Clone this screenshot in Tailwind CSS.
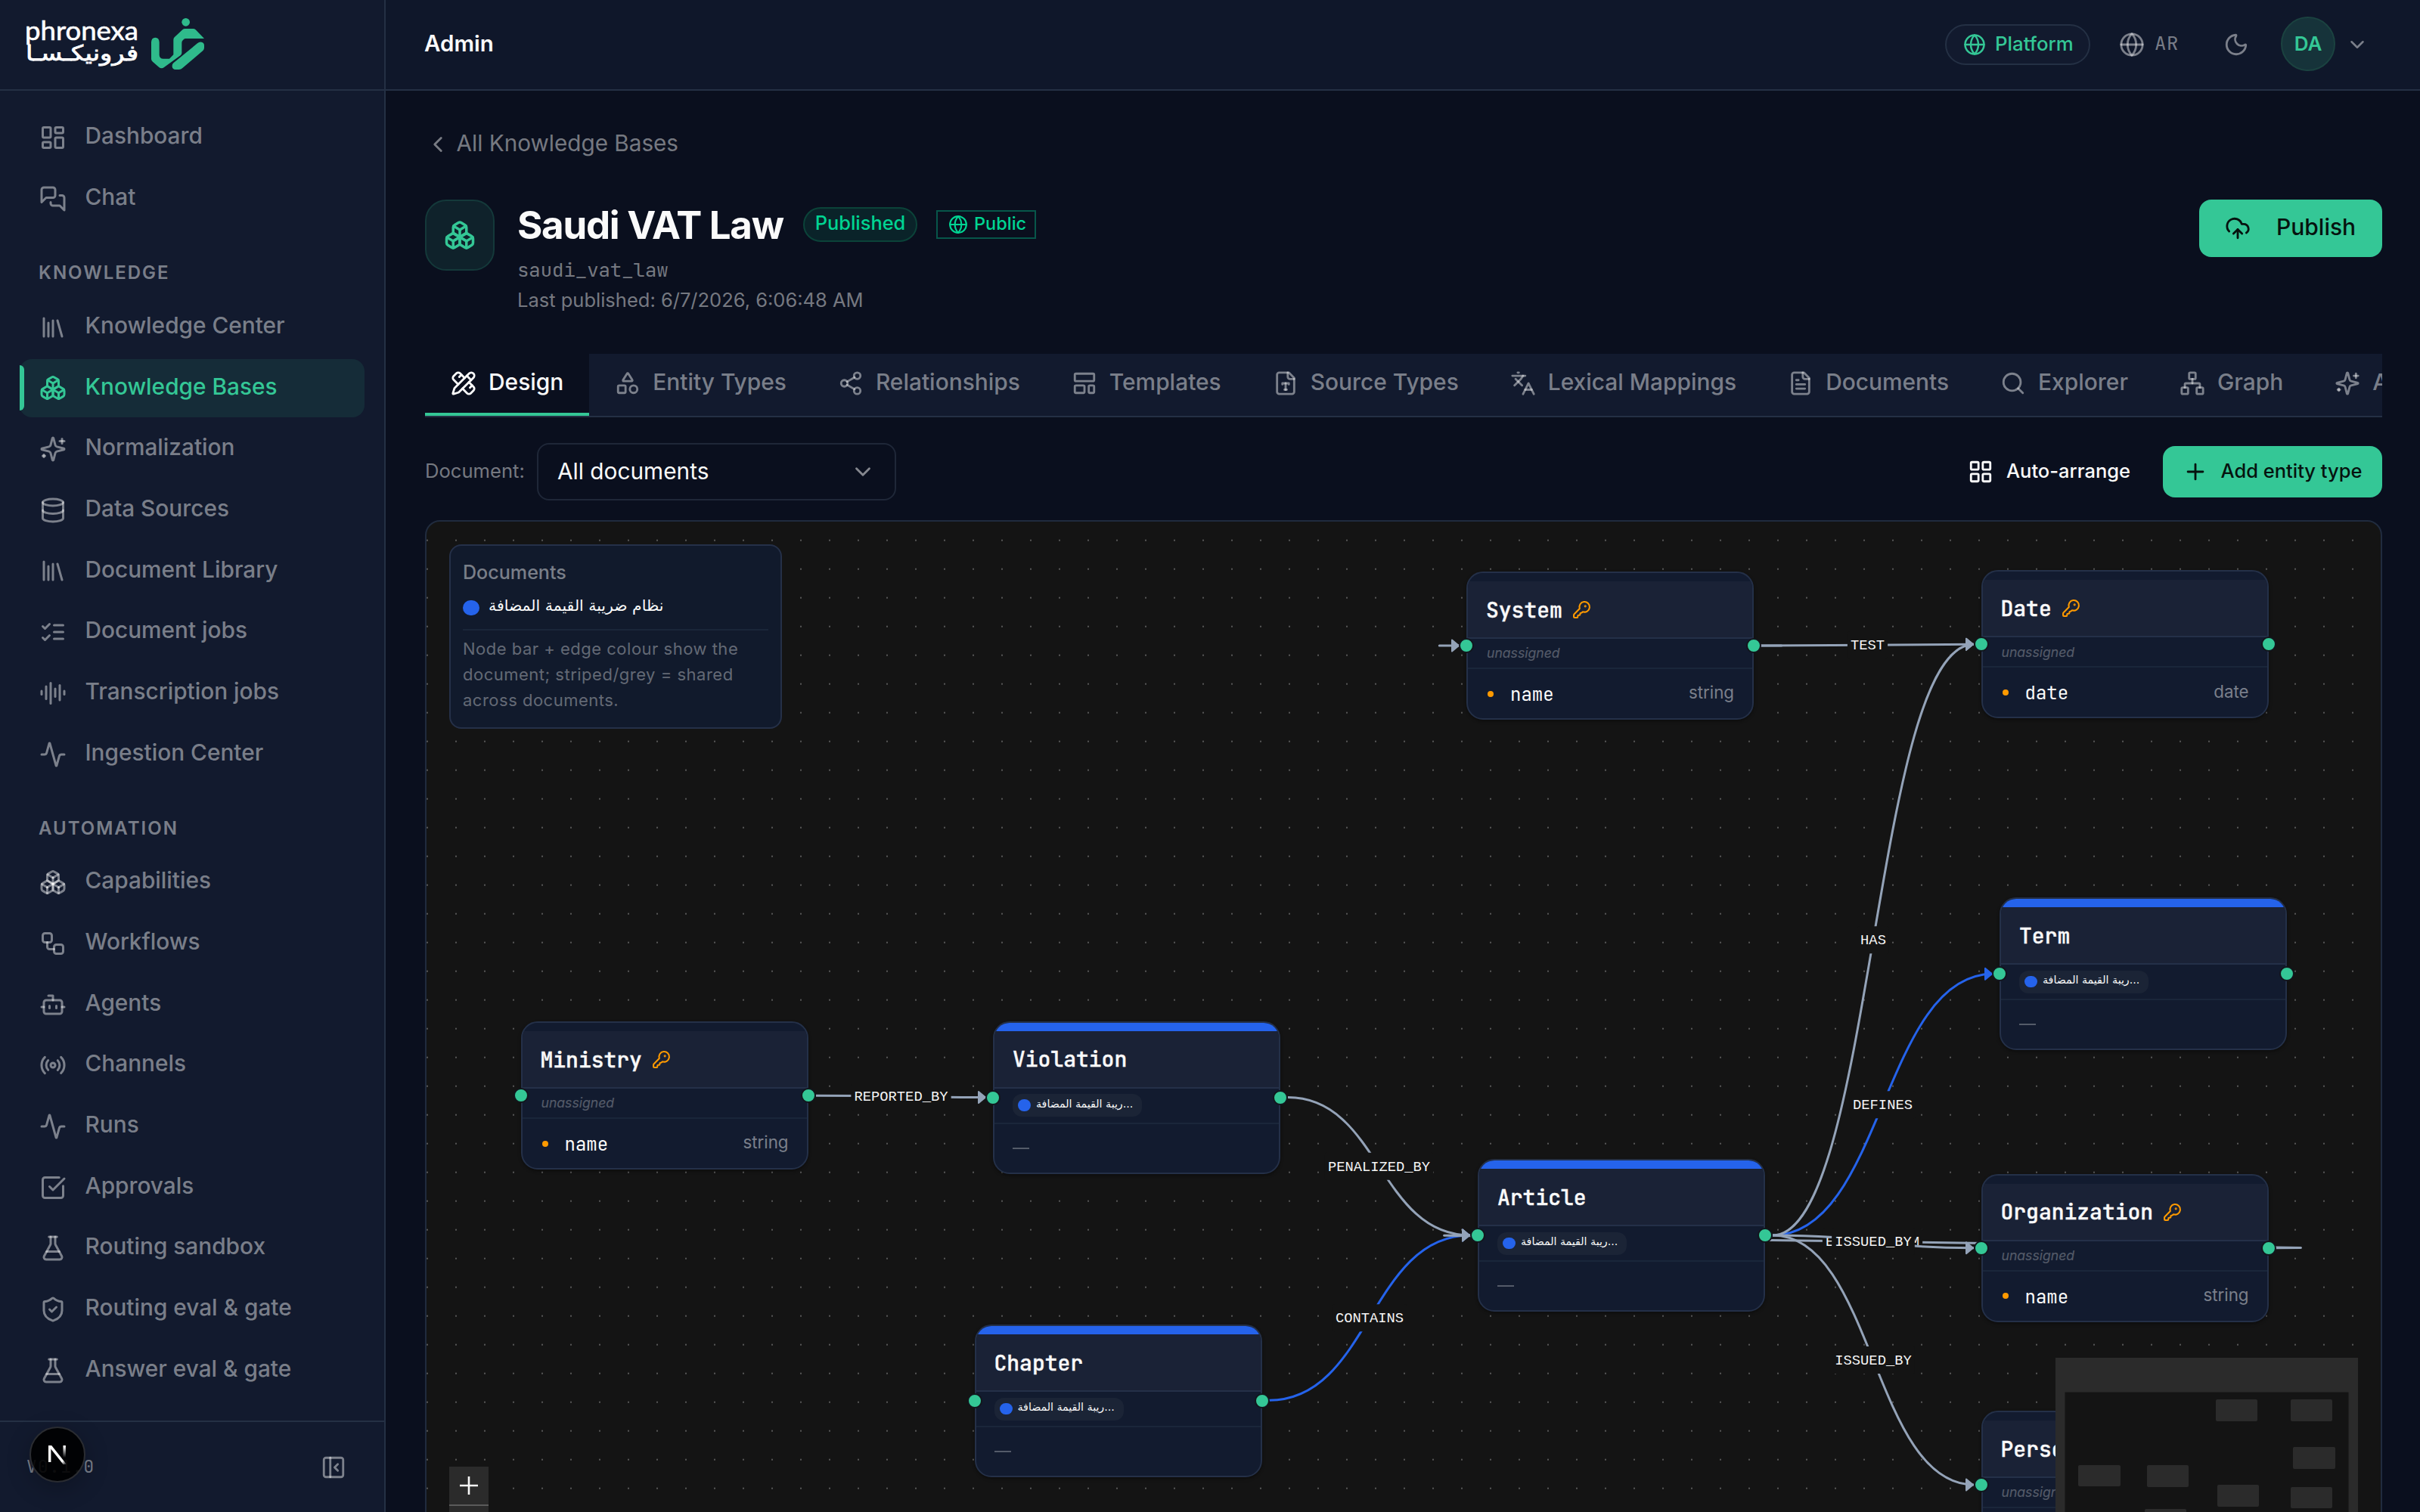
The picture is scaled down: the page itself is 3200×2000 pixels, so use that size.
<!DOCTYPE html>
<html lang="en">
<head>
<meta charset="utf-8">
<title>Saudi VAT Law – Knowledge Bases</title>
<script src="https://cdn.jsdelivr.net/npm/@tailwindcss/browser@4"></script>
</head>
<body class="bg-[#0a0f1e] text-[#fafafa] font-['Inter',sans-serif] leading-none">
<svg class="hidden">
  <symbol id="dashboard" viewBox="0 0 24 24"><rect width="7" height="9" x="3" y="3" rx="1"/><rect width="7" height="5" x="14" y="3" rx="1"/><rect width="7" height="9" x="14" y="12" rx="1"/><rect width="7" height="5" x="3" y="16" rx="1"/></symbol>
  <symbol id="chat" viewBox="0 0 24 24"><path d="M14 9a2 2 0 0 1-2 2H6l-4 4V4a2 2 0 0 1 2-2h8a2 2 0 0 1 2 2z"/><path d="M18 9h2a2 2 0 0 1 2 2v11l-4-4h-6a2 2 0 0 1-2-2v-1"/></symbol>
  <symbol id="library" viewBox="0 0 24 24"><path d="m16 6 4 14"/><path d="M12 6v14"/><path d="M8 8v12"/><path d="M4 4v16"/></symbol>
  <symbol id="boxes" viewBox="0 0 24 24"><path d="M2.97 12.92A2 2 0 0 0 2 14.63v3.24a2 2 0 0 0 .97 1.71l3 1.8a2 2 0 0 0 2.06 0L12 19v-5.5l-5-3-4.03 2.42Z"/><path d="m7 16.5-4.74-2.85"/><path d="m7 16.5 5-3"/><path d="M7 16.5v5.17"/><path d="M12 13.5V19l3.97 2.38a2 2 0 0 0 2.06 0l3-1.8a2 2 0 0 0 .97-1.71v-3.24a2 2 0 0 0-.97-1.71L17 10.5l-5 3Z"/><path d="m17 16.5-5-3"/><path d="m17 16.5 4.74-2.85"/><path d="M17 16.5v5.17"/><path d="M7.97 4.42A2 2 0 0 0 7 6.13v4.37l5 3 5-3V6.13a2 2 0 0 0-.97-1.71l-3-1.8a2 2 0 0 0-2.06 0l-3 1.8Z"/><path d="M12 8 7.26 5.15"/><path d="m12 8 4.74-2.85"/><path d="M12 13.5V8"/></symbol>
  <symbol id="sparkles" viewBox="0 0 24 24"><path d="M9.937 15.5A2 2 0 0 0 8.5 14.063l-6.135-1.582a.5.5 0 0 1 0-.962L8.5 9.936A2 2 0 0 0 9.937 8.5l1.582-6.135a.5.5 0 0 1 .963 0L14.063 8.5A2 2 0 0 0 15.5 9.937l6.135 1.581a.5.5 0 0 1 0 .964L15.5 14.063a2 2 0 0 0-1.437 1.437l-1.582 6.135a.5.5 0 0 1-.963 0z"/><path d="M20 3v4"/><path d="M22 5h-4"/><path d="M4 17v2"/><path d="M5 18H3"/></symbol>
  <symbol id="database" viewBox="0 0 24 24"><ellipse cx="12" cy="5" rx="9" ry="3"/><path d="M3 5V19A9 3 0 0 0 21 19V5"/><path d="M3 12A9 3 0 0 0 21 12"/></symbol>
  <symbol id="checks" viewBox="0 0 24 24"><path d="m3 17 2 2 4-4"/><path d="m3 7 2 2 4-4"/><path d="M13 6h8"/><path d="M13 12h8"/><path d="M13 18h8"/></symbol>
  <symbol id="audio" viewBox="0 0 24 24"><path d="M2 10v3"/><path d="M6 6v11"/><path d="M10 3v18"/><path d="M14 8v7"/><path d="M18 5v13"/><path d="M22 10v3"/></symbol>
  <symbol id="activity" viewBox="0 0 24 24"><path d="M22 12h-2.48a2 2 0 0 0-1.93 1.46l-2.35 8.36a.25.25 0 0 1-.48 0L9.24 2.18a.25.25 0 0 0-.48 0l-2.35 8.36A2 2 0 0 1 4.49 12H2"/></symbol>
  <symbol id="workflow" viewBox="0 0 24 24"><rect width="8" height="8" x="3" y="3" rx="2"/><path d="M7 11v4a2 2 0 0 0 2 2h4"/><rect width="8" height="8" x="13" y="13" rx="2"/></symbol>
  <symbol id="bot" viewBox="0 0 24 24"><path d="M12 8V4H8"/><rect width="16" height="12" x="4" y="8" rx="2"/><path d="M2 14h2"/><path d="M20 14h2"/><path d="M15 13v2"/><path d="M9 13v2"/></symbol>
  <symbol id="radio" viewBox="0 0 24 24"><path d="M4.9 19.1C1 15.2 1 8.8 4.9 4.9"/><path d="M7.8 16.2c-2.3-2.3-2.3-6.1 0-8.5"/><circle cx="12" cy="12" r="2"/><path d="M16.2 7.8c2.3 2.3 2.3 6.1 0 8.5"/><path d="M19.1 4.9C23 8.8 23 15.1 19.1 19"/></symbol>
  <symbol id="approve" viewBox="0 0 24 24"><path d="M21 10.5V19a2 2 0 0 1-2 2H5a2 2 0 0 1-2-2V5a2 2 0 0 1 2-2h12.5"/><path d="m9 11 3 3L22 4"/></symbol>
  <symbol id="flask" viewBox="0 0 24 24"><path d="M14 2v6a2 2 0 0 0 .245.96l5.51 10.08A2 2 0 0 1 18 22H6a2 2 0 0 1-1.755-2.96l5.51-10.08A2 2 0 0 0 10 8V2"/><path d="M6.453 15h11.094"/><path d="M8.5 2h7"/></symbol>
  <symbol id="shield" viewBox="0 0 24 24"><path d="M20 13c0 5-3.5 7.5-7.66 8.95a1 1 0 0 1-.67-.01C7.5 20.5 4 18 4 13V6a1 1 0 0 1 1-1c2 0 4.5-1.2 6.24-2.72a1.17 1.17 0 0 1 1.52 0C14.51 3.81 17 5 19 5a1 1 0 0 1 1 1z"/><path d="m9 12 2 2 4-4"/></symbol>
  <symbol id="panel" viewBox="0 0 24 24"><rect width="18" height="18" x="3" y="3" rx="2"/><path d="M9 3v18"/><path d="m16 15-3-3 3-3"/></symbol>
  <symbol id="globe" viewBox="0 0 24 24"><circle cx="12" cy="12" r="10"/><path d="M12 2a14.5 14.5 0 0 0 0 20 14.5 14.5 0 0 0 0-20"/><path d="M2 12h20"/></symbol>
  <symbol id="moon" viewBox="0 0 24 24"><path d="M20.985 12.486a9 9 0 1 1-9.473-9.472c.405-.022.617.46.402.803a6 6 0 0 0 8.268 8.268c.344-.215.825-.004.803.401"/></symbol>
  <symbol id="down" viewBox="0 0 24 24"><path d="m6 9 6 6 6-6"/></symbol>
  <symbol id="left" viewBox="0 0 24 24"><path d="m15 18-6-6 6-6"/></symbol>
  <symbol id="design" viewBox="0 0 24 24"><path d="M13 7 8.7 2.7a2.41 2.41 0 0 0-3.4 0L2.7 5.3a2.41 2.41 0 0 0 0 3.4L7 13"/><path d="m8 6 2-2"/><path d="m18 16 2-2"/><path d="m17 11 4.3 4.3c.94.94.94 2.46 0 3.4l-2.6 2.6c-.94.94-2.46.94-3.4 0L11 17"/><path d="M21.174 6.812a1 1 0 0 0-3.986-3.987L3.842 16.174a2 2 0 0 0-.5.83l-1.321 4.352a.5.5 0 0 0 .623.622l4.353-1.32a2 2 0 0 0 .83-.497z"/><path d="m15 5 4 4"/></symbol>
  <symbol id="shapes" viewBox="0 0 24 24"><path d="M8.3 10a.7.7 0 0 1-.626-1.079L11.4 3a.7.7 0 0 1 1.198-.043L16.3 8.9a.7.7 0 0 1-.572 1.1Z"/><rect x="3" y="14" width="7" height="7" rx="1"/><circle cx="17.5" cy="17.5" r="3.5"/></symbol>
  <symbol id="share" viewBox="0 0 24 24"><circle cx="18" cy="5" r="3"/><circle cx="6" cy="12" r="3"/><circle cx="18" cy="19" r="3"/><path d="M8.59 13.51 15.42 17.49"/><path d="M15.41 6.51 8.59 10.49"/></symbol>
  <symbol id="template" viewBox="0 0 24 24"><rect width="18" height="7" x="3" y="3" rx="1"/><rect width="9" height="7" x="3" y="14" rx="1"/><rect width="5" height="7" x="16" y="14" rx="1"/></symbol>
  <symbol id="filetype" viewBox="0 0 24 24"><path d="M15 2H6a2 2 0 0 0-2 2v16a2 2 0 0 0 2 2h12a2 2 0 0 0 2-2V7Z"/><path d="M14 2v4a2 2 0 0 0 2 2h4"/><path d="M9 13v-1h6v1"/><path d="M12 12v6"/><path d="M11 18h2"/></symbol>
  <symbol id="languages" viewBox="0 0 24 24"><path d="m5 8 6 6"/><path d="m4 14 6-6 2-3"/><path d="M2 5h12"/><path d="M7 2h1"/><path d="m22 22-5-10-5 10"/><path d="M14 18h6"/></symbol>
  <symbol id="filetext" viewBox="0 0 24 24"><path d="M15 2H6a2 2 0 0 0-2 2v16a2 2 0 0 0 2 2h12a2 2 0 0 0 2-2V7Z"/><path d="M14 2v4a2 2 0 0 0 2 2h4"/><path d="M10 9H8"/><path d="M16 13H8"/><path d="M16 17H8"/></symbol>
  <symbol id="search" viewBox="0 0 24 24"><circle cx="11" cy="11" r="8"/><path d="m21 21-4.3-4.3"/></symbol>
  <symbol id="network" viewBox="0 0 24 24"><rect x="16" y="16" width="6" height="6" rx="1"/><rect x="2" y="16" width="6" height="6" rx="1"/><rect x="9" y="2" width="6" height="6" rx="1"/><path d="M5 16v-3a1 1 0 0 1 1-1h12a1 1 0 0 1 1 1v3"/><path d="M12 12V8"/></symbol>
  <symbol id="grid" viewBox="0 0 24 24"><rect width="7" height="7" x="3" y="3" rx="1"/><rect width="7" height="7" x="14" y="3" rx="1"/><rect width="7" height="7" x="14" y="14" rx="1"/><rect width="7" height="7" x="3" y="14" rx="1"/></symbol>
  <symbol id="plus" viewBox="0 0 24 24"><path d="M5 12h14"/><path d="M12 5v14"/></symbol>
  <symbol id="upload" viewBox="0 0 24 24"><path d="M12 13v8"/><path d="M4 14.899A7 7 0 1 1 15.71 8h1.79a4.5 4.5 0 0 1 2.5 8.242"/><path d="m8 17 4-4 4 4"/></symbol>
  <symbol id="key" viewBox="0 0 24 24"><path d="M2.586 17.414A2 2 0 0 0 2 18.828V21a1 1 0 0 0 1 1h3a1 1 0 0 0 1-1v-1a1 1 0 0 1 1-1h1a1 1 0 0 0 1-1v-1a1 1 0 0 1 1-1h.172a2 2 0 0 0 1.414-.586l.814-.814a6.5 6.5 0 1 0-4-4z"/><circle cx="16.5" cy="7.5" r=".5" fill="currentColor"/></symbol>
</svg>

<div class="flex h-screen w-screen overflow-hidden">
  <!-- Sidebar -->
  <aside class="relative flex w-[510px] shrink-0 flex-col border-r-2 border-[#243044] bg-[#121a2e]">
    <div class="flex h-[120px] shrink-0 items-start border-b-2 border-[#243044] pl-8 pt-5">
      <svg class="h-[80px] w-[244px]" viewBox="32 20 244 80">
        <g fill="#fff" stroke="#fff">
          <text x="33" y="53" font-family="Lato, sans-serif" font-size="34.5" textLength="150" lengthAdjust="spacingAndGlyphs" stroke-width=".6">phronexa</text>
          <text x="34" y="80" font-family="'DejaVu Sans', sans-serif" font-size="28" textLength="149" lengthAdjust="spacingAndGlyphs" stroke-width=".8">فرونيكـسـا</text>
        </g>
        <g fill="#2fba8b" transform="translate(20 10) scale(.33333)">
          <circle cx="677" cy="58" r="16"/>
          <path d="M540 137Q541 119 556 119Q571 119 572 137V188Q573 203 588 203H612L628 187V128Q628 122 632 118L664 88Q668 84 674 84H706Q712 84 716 88L750 123H676Q672 123 669 126L664 131Q661 134 661 140V180Q661 186 656 190L592 236Q581 245 570 236L546 215Q540 210 540 204Z"/>
          <path d="M628 220L724 141Q731 135 739 137Q750 139 750 150V160Q750 166 745 171L664 240Q658 246 650 246H636Q624 245 623 234Q622 226 628 220Z"/>
        </g>
      </svg>
    </div>
    <nav id="nav" class="flex min-h-0 flex-1 flex-col overflow-hidden px-[26px] pt-6"></nav>
    <div class="flex h-[121px] shrink-0 items-center justify-between border-t-2 border-[#243044] pl-[35px] pr-[50px] text-white/45">
      <span class="font-['JetBrains_Mono','Roboto_Mono',monospace] text-[22.5px] tracking-[1.6px]">V0.1.0</span>
      <svg class="size-[34px]" fill="none" stroke="currentColor" stroke-width="2" stroke-linecap="round" stroke-linejoin="round"><use href="#panel"/></svg>
    </div>
    <!-- Dev indicator badge -->
    <div class="absolute bottom-[39px] left-[39px] flex size-[74px] items-center justify-center rounded-full border-2 border-[#2a2c31] bg-black/90 shadow-[0_8px_32px_rgba(0,0,0,0.24)]">
      <svg class="size-[26px]" viewBox="0 0 26 26" fill="none">
        <defs><linearGradient id="n1" x1="0" y1="0" x2="0" y2="1"><stop offset=".1" stop-color="#fff"/><stop offset="1" stop-color="#fff" stop-opacity="0"/></linearGradient>
        <linearGradient id="n2" x1="0" y1="0" x2="1" y2="1"><stop offset=".8" stop-color="#fff"/><stop offset="1" stop-color="#fff" stop-opacity="0"/></linearGradient></defs>
        <rect x="1" y="1" width="3.4" height="22" fill="#fff"/><rect x="20.5" y="1" width="3.4" height="16" fill="url(#n1)"/>
        <path d="M1 1h4.2L25 26h-4.4L1 1.6z" fill="url(#n2)"/>
      </svg>
    </div>
  </aside>

  <div class="flex min-w-0 flex-1 flex-col">
    <!-- Top bar -->
    <header class="flex h-[120px] shrink-0 items-center justify-between border-b-2 border-[#243044] bg-[#0f172a] pl-[51px] pr-[68px]">
      <h1 class="pb-[3px] text-[29.5px] font-semibold">Admin</h1>
      <div class="flex items-center text-white/45">
        <div class="flex h-[54px] w-[192px] items-center gap-3 rounded-full border-2 border-[#243044] bg-[#121a2e] pl-[22px] text-[#34c796]">
          <svg class="size-[30px]" fill="none" stroke="currentColor" stroke-width="2" stroke-linecap="round" stroke-linejoin="round"><use href="#globe"/></svg>
          <span class="pb-[3px] text-[25.8px] font-medium">Platform</span>
        </div>
        <svg class="ml-[38px] size-[34px]" fill="none" stroke="currentColor" stroke-width="2" stroke-linecap="round" stroke-linejoin="round"><use href="#globe"/></svg>
        <span class="ml-[13px] w-[91px] pb-[3px] font-['JetBrains_Mono','Roboto_Mono',monospace] text-[25.6px] tracking-[0.6px]">AR</span>
        <svg class="size-[34px]" fill="none" stroke="currentColor" stroke-width="2" stroke-linecap="round" stroke-linejoin="round"><use href="#moon"/></svg>
        <div class="ml-[42px] mb-[2px] flex size-[72px] items-center justify-center rounded-full border-2 border-[#1b4240] bg-[#16333a] text-[26px] font-semibold text-[#34c796]">DA</div>
        <svg class="ml-[14px] size-[30px]" fill="none" stroke="currentColor" stroke-width="2" stroke-linecap="round" stroke-linejoin="round"><use href="#down"/></svg>
      </div>
    </header>

    <main class="flex min-h-0 flex-1 flex-col overflow-hidden pl-[52px] pr-[50px] pt-[53px]">
      <div class="flex h-9 shrink-0 items-center gap-[7.5px] text-white/45">
        <svg class="size-[34px]" fill="none" stroke="currentColor" stroke-width="2" stroke-linecap="round" stroke-linejoin="round"><use href="#left"/></svg>
        <span class="pb-[3px] text-[29.7px]">All Knowledge Bases</span>
      </div>

      <section class="mt-[55px] flex h-[204px] shrink-0 items-start">
        <div class="flex h-[94px] w-[92px] items-center justify-center rounded-[28px] border-2 border-[#14393a] bg-[#0f222b] text-[#34c796]">
          <svg class="size-[42px]" fill="none" stroke="currentColor" stroke-width="2" stroke-linecap="round" stroke-linejoin="round"><use href="#boxes"/></svg>
        </div>
        <div class="ml-[30px] flex-1 pt-[3px]">
          <div class="flex h-[60px] items-center">
            <h2 class="w-[378px] whitespace-nowrap text-[51px] font-bold tracking-[-0.025em]">Saudi VAT Law</h2>
            <span class="flex h-[46px] w-[151px] items-center justify-center rounded-full border-2 border-[#0b4339] bg-[#0a2329] pb-[4px] text-[25.4px] font-medium text-[#00d492]">Published</span>
            <span class="ml-[25px] flex h-[38px] w-[132px] items-center gap-[8px] border-2 border-[#07564a] pl-[14px] text-[#00d492]">
              <svg class="size-[26px]" fill="none" stroke="currentColor" stroke-width="2" stroke-linecap="round" stroke-linejoin="round"><use href="#globe"/></svg>
              <span class="pb-[2px] text-[23.5px] font-medium">Public</span>
            </span>
          </div>
          <div class="mt-[11px] flex h-10 items-center font-['JetBrains_Mono','Roboto_Mono',monospace] text-[25.6px] text-white/45">saudi_vat_law</div>
          <div class="-mt-px flex h-10 items-center text-[25.5px] text-white/45">Last published: 6/7/2026, 6:06:48 AM</div>
        </div>
        <button class="flex h-[76px] w-[242px] items-center rounded-2xl bg-[#34c796] pl-[34px] text-[#06130f]">
          <svg class="size-[34px]" fill="none" stroke="currentColor" stroke-width="2" stroke-linecap="round" stroke-linejoin="round"><use href="#upload"/></svg>
          <span class="ml-[34px] pb-[5px] text-[30px] font-medium">Publish</span>
        </button>
      </section>

      <div id="tabs" class="flex h-[84px] shrink-0 overflow-hidden border-b-2 border-[#243044] bg-[#121a2e]"></div>

      <div class="mt-[34px] flex h-[76px] shrink-0 items-center justify-between">
        <div class="flex items-center">
          <span class="w-[148px] pb-[3px] text-[25.6px] text-white/45">Document:</span>
          <div class="flex h-[76px] w-[475px] items-center justify-between rounded-2xl border-2 border-[#1f2738] pl-[25px] pr-[25px]">
            <span class="text-[29.8px]">All documents</span>
            <svg class="size-[34px] text-white/50" fill="none" stroke="currentColor" stroke-width="2" stroke-linecap="round" stroke-linejoin="round"><use href="#down"/></svg>
          </div>
        </div>
        <div class="flex items-center">
          <svg class="size-[34px]" fill="none" stroke="currentColor" stroke-width="2" stroke-linecap="round" stroke-linejoin="round"><use href="#grid"/></svg>
          <span class="ml-[17px] w-[207px] pb-[3px] text-[25.5px] font-medium">Auto-arrange</span>
          <button class="flex h-[68px] w-[290px] items-center rounded-2xl bg-[#34c796] pl-[26px] text-[#06130f]">
            <svg class="size-[34px]" fill="none" stroke="currentColor" stroke-width="2" stroke-linecap="round" stroke-linejoin="round"><use href="#plus"/></svg>
            <span class="ml-[16.5px] pb-[3px] text-[25.5px] font-medium">Add entity type</span>
          </button>
        </div>
      </div>

      <!-- Ontology canvas -->
      <div class="relative mt-[26px] h-[1400px] shrink-0 overflow-hidden rounded-t-[20px] border-2 border-[#202b3e] bg-[#141414]">
        <svg id="edges" class="absolute inset-0 h-[1310px] w-[2584px]" viewBox="564 690 2584 1310" fill="none"></svg>
        <div id="nodes"></div>

        <!-- Document legend -->
        <div class="absolute left-[30px] top-[30px] flex h-[244px] w-[440px] flex-col rounded-2xl border-2 border-[#253048] bg-[#111a2c] px-4 pt-[20px]">
          <div class="h-[30px] text-[25.1px] font-medium leading-[30px] text-white/45">Documents</div>
          <div class="mt-[16px] flex h-8 items-center gap-3">
            <span class="h-5 w-[22px] rounded-full bg-[#2563eb]"></span>
            <span dir="rtl" class="pb-[5px] font-['DejaVu_Sans',sans-serif] text-[20.4px]">نظام ضريبة القيمة المضافة</span>
          </div>
          <div class="mt-[12px] border-t-2 border-[#1a2639] pt-[7px] text-[22px] leading-[34px] tracking-[0.5px] text-white/36">Node bar + edge colour show the<br>document; striped/grey = shared<br>across documents.</div>
        </div>

        <!-- Zoom controls -->
        <div class="absolute left-[30px] top-[1250px] w-[52px] bg-[#2b2b2b]">
          <div class="flex h-[52px] items-center justify-center border-b-2 border-[#5b5b5b]">
            <svg class="size-6" viewBox="0 0 24 24" fill="#f8f8f8"><path d="M10.7 0h2.6v10.7H24v2.6H13.3V24h-2.6V13.3H0v-2.6h10.7z"/></svg>
          </div>
          <div class="h-[52px]"></div>
        </div>

        <!-- Minimap -->
        <svg class="absolute left-[2154px] top-[1106px] h-[300px] w-[400px]" viewBox="2718 1796 400 300">
          <rect x="2718" y="1796" width="400" height="300" fill="#2b2b2b"/>
          <rect x="2730.5" y="1841.5" width="375" height="300" fill="#141414"/>
          <g fill="#2b2b2b"><rect x="2930" y="1851" width="55" height="29" rx="2"/><rect x="3029" y="1851" width="55" height="29" rx="2"/><rect x="3032" y="1914" width="56" height="29" rx="2"/><rect x="2748" y="1938" width="56" height="28" rx="2"/><rect x="2839" y="1938" width="55" height="29" rx="2"/><rect x="2932" y="1964" width="55" height="29" rx="2"/><rect x="3029" y="1967" width="55" height="28" rx="2"/><rect x="2836" y="1996" width="55" height="29" rx="2"/></g>
        </svg>
      </div>
    </main>
  </div>
</div>

<script>
const icon = (id, cls) => `<svg class="${cls}" fill="none" stroke="currentColor" stroke-width="2" stroke-linecap="round" stroke-linejoin="round"><use href="#${id}"/></svg>`;

// Sidebar navigation; plain strings are group headings
const nav = [['dashboard','Dashboard'],['chat','Chat'],'KNOWLEDGE',['library','Knowledge Center'],['boxes','Knowledge Bases',1],['sparkles','Normalization'],['database','Data Sources'],['library','Document Library'],['checks','Document jobs'],['audio','Transcription jobs'],['activity','Ingestion Center'],'AUTOMATION',['boxes','Capabilities'],['workflow','Workflows'],['bot','Agents'],['radio','Channels'],['activity','Runs'],['approve','Approvals'],['flask','Routing sandbox'],['shield','Routing eval & gate'],['flask','Answer eval & gate']];
document.getElementById('nav').innerHTML = nav.map(n => typeof n === 'string'
  ? `<div class="h-[89px] shrink-0 pl-[25px] pt-[41px] text-[24px] font-semibold leading-[30px] tracking-[2px] text-white/45">${n}</div>`
  : `<div class="mb-1 flex h-[76.7px] shrink-0 items-center gap-[24.5px] pl-[26px] text-[29.8px] font-medium ${n[2] ? 'relative rounded-2xl bg-[#152c38] text-[#34c796]' : 'text-white/45'}">${n[2] ? '<span class="absolute left-0 top-2 h-[60px] w-1.5 rounded-r-full bg-[#34c796]"></span>' : ''}${icon(n[0], 'size-9')}<span class="pb-[4px]">${n[1].replace('&','&amp;')}</span></div>`).join('');

const tabs = [['design','Design',1],['shapes','Entity Types'],['share','Relationships'],['template','Templates'],['filetype','Source Types'],['languages','Lexical Mappings'],['filetext','Documents'],['search','Explorer'],['network','Graph'],['sparkles','Agents']];
document.getElementById('tabs').innerHTML = tabs.map(t =>
  `<div class="flex h-[82px] shrink-0 items-center gap-[16px] border-b-4 px-[34px] text-[29.9px] font-medium ${t[2] ? 'border-[#34c796] bg-[#0a0f1e] text-[#fafafa]' : 'border-transparent text-white/45'}">${icon(t[0], 'size-[34px]')}<span class="whitespace-nowrap pb-[3px]">${t[1]}</span></div>`).join('');

// Entity nodes: x, y, title, property name, property type (none = document-bound type)
const nodes = [[1939,756,'System','name','string'],[2619.5,754.3,'Date','date','date'],[688.5,1351,'Ministry','name','string'],[1313,1350.5,'Violation'],[1954,1533,'Article'],[1288.5,1752,'Chapter'],[2644,1187,'Term'],[2619.5,1552.7,'Organization','name','string'],[2619.5,1866,'Person','name','string']];
const handle = c => `<span class="absolute top-1/2 size-5 -translate-y-1/2 rounded-full border-2 border-[#12161d] bg-[#34c796] ${c}"></span>`;
document.getElementById('nodes').innerHTML = nodes.map(([x,y,t,p,ty]) => `
  <div class="absolute w-[380px]" style="left:${x-564}px;top:${y-690}px">
    <div class="overflow-hidden rounded-[22px] border-2 border-[#243048] bg-[#121b2f] shadow-[0_2px_4px_rgba(0,0,0,0.4)]">
      <div class="${p ? 'h-[11px]' : 'h-[11px] bg-[#2563eb]'}"></div>
      <div class="flex h-[76px] items-center gap-[13px] border-b-2 border-[#243048] bg-[#1a2236] pl-[24px] pt-[1px] font-['JetBrains_Mono','Roboto_Mono',monospace] text-[28px] font-medium [-webkit-text-stroke:0.4px]">${t}${p ? icon('key','size-[25px] text-[#ff9a00]') : ''}</div>
      ${p ? `<div class="flex h-[40px] items-center border-b-2 border-[#1a263a] pl-[25px] text-[17.6px] italic text-white/28">unassigned</div>
      <div class="flex h-[65px] items-center pl-[26px] pr-[24px]"><span class="size-2 rounded-full bg-[#ff9a00]"></span><span class="flex-1 pl-[22px] pt-[3px] font-['JetBrains_Mono','Roboto_Mono',monospace] text-[24px]">${p}</span><span class="pb-[2px] text-[22.3px] text-white/45">${ty}</span></div>`
      : `<div class="flex h-[47px] items-center border-b-2 border-[#1a263a] pl-[24px]"><span class="flex h-[30px] w-[171px] items-center gap-[7px] rounded-xl bg-[#1b2436] pl-[7px]"><span class="h-[15.5px] w-[17px] rounded-full bg-[#2563eb]"></span><span dir="rtl" class="whitespace-nowrap pb-[4px] font-['DejaVu_Sans',sans-serif] text-[14.2px]">...ريبة القيمة المضافة</span></span></div>
      <div class="flex h-[64px] items-center pl-[24px]"><span class="h-[2px] w-[22px] bg-white/28"></span></div>`}
    </div>
    ${handle('-left-[10px]')}${handle('-right-[10px]')}
  </div>`).join('');

// Edges in canvas coordinates
const G = '#94a3b8', B = '#2563eb';
let out = '<defs><pattern id="dots" x="602" y="713.7" width="38" height="38" patternUnits="userSpaceOnUse"><rect width="2" height="2" fill="#565656"/></pattern></defs><rect x="564" y="690" width="2584" height="1310" fill="url(#dots)"/>';
const edge = (x1,y1,x2,y2,c,label,k) => {
  const d = k || (x2-x1)/2;
  out += `<path d="M${x1} ${y1}C${x1+d} ${y1} ${x2-d} ${y2} ${x2} ${y2}" stroke="${c}" stroke-width="3"/><path d="M${x2-10} ${y2-7.5}L${x2-1} ${y2}L${x2-10} ${y2+7.5}Z" fill="${c}" stroke="${c}" stroke-width="2" stroke-linejoin="round"/>`;
  if (label) {
    const w = label.length*11.3, cx = (x1+x2)/2, cy = (y1+y2)/2;
    out += `<rect x="${cx-w/2-4}" y="${cy-18}" width="${w+8}" height="36" rx="3" fill="#141414"/><text x="${cx}" y="${cy+6}" text-anchor="middle" fill="#f5f5f5" font-family="'Courier New','Liberation Mono',monospace" font-size="18.8">${label}</text>`;
  }
};
edge(2329,854,1930,854,G,'',175);
edge(2329,854,2610,852.3,G,'TEST');
edge(1079,1449.2,1304,1451.5,G,'REPORTED_BY');
edge(1678,1852.3,1944,1634,B,'CONTAINS');
edge(1703,1451.5,1944,1634,G,'PENALIZED_BY');
edge(2344,1634,2635,1288.3,B,'DEFINES');
edge(3008,1650.7,1944,1634,G,'EXEMPT_FROM',290);
edge(2344,1634,2610,852.3,G,'HAS');
edge(2344,1634,2610,1650.7,G,'ISSUED_BY');
edge(2344,1634,2610,1964,G,'ISSUED_BY');
document.getElementById('edges').innerHTML = out;
</script>
</body>
</html>
